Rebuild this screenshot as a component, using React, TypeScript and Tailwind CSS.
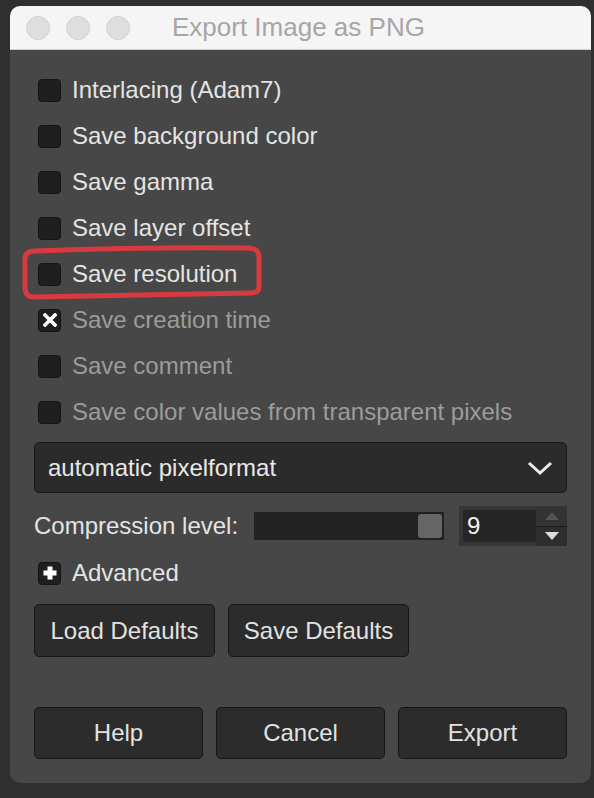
import type { ReactNode } from "react";

const FONT = { fontFamily: '"Liberation Sans", Arial, sans-serif' };

type Option = { label: string; checked?: boolean; disabled?: boolean };

const OPTIONS: Option[] = [
  { label: "Interlacing (Adam7)" },
  { label: "Save background color" },
  { label: "Save gamma" },
  { label: "Save layer offset" },
  { label: "Save resolution" },
  { label: "Save creation time", checked: true, disabled: true },
  { label: "Save comment", disabled: true },
  { label: "Save color values from transparent pixels", disabled: true },
];

function Box({ children }: { children?: ReactNode }) {
  return (
    <span className="flex h-[23px] w-[23px] shrink-0 items-center justify-center rounded-[4px] border border-[#141414] bg-[#1f1f1f]">
      {children}
    </span>
  );
}

function CrossMark() {
  return (
    <svg width="14" height="14" viewBox="0 0 14 14">
      <path d="M2 2 L12 12 M12 2 L2 12" stroke="#fff" strokeWidth="3.6" strokeLinecap="square" />
    </svg>
  );
}

function PlusMark() {
  return (
    <svg width="16" height="16" viewBox="0 0 16 16">
      <path d="M8 1.5 V14.5 M1.5 8 H14.5" stroke="#fff" strokeWidth="5" />
    </svg>
  );
}

function Button({ label, className = "" }: { label: string; className?: string }) {
  return (
    <button
      type="button"
      className={
        "flex items-center justify-center rounded-[5px] border border-[#161616] bg-[#2c2c2c] text-[24px] text-[#e2e2e2] " +
        className
      }
    >
      {label}
    </button>
  );
}

export default function App() {
  return (
    <div className="relative h-[798px] w-[594px] overflow-hidden bg-[#2f2f2f] pt-[6px] pl-[10px]" style={FONT}>
      <div className="flex h-[777px] w-[581px] flex-col overflow-hidden rounded-[10px] bg-[#474747]">
        {/* title bar */}
        <div className="relative flex h-[44px] shrink-0 items-center border-b border-[#cfcfcf] bg-[#f5f5f5] pl-[16px]">
          <div className="flex gap-[16px]">
            <span className="h-[24px] w-[24px] rounded-full border border-[#d2d2d2] bg-[#dedede]" />
            <span className="h-[24px] w-[24px] rounded-full border border-[#d2d2d2] bg-[#dedede]" />
            <span className="h-[24px] w-[24px] rounded-full border border-[#d2d2d2] bg-[#dedede]" />
          </div>
          <span className="ml-[42px] text-[26px] text-[#a6a6a6]">Export Image as PNG</span>
        </div>

        <div className="flex flex-1 flex-col px-[24px] pt-[17px] pb-[24px]">
          <div className="flex flex-col pl-[4px]">
            {OPTIONS.map((o) => (
              <div key={o.label} className="flex h-[46px] items-center gap-[11px]">
                <Box>{o.checked ? <CrossMark /> : null}</Box>
                <span className={"text-[24px] " + (o.disabled ? "text-[#9c9c9c]" : "text-[#e4e4e4]")}>
                  {o.label}
                </span>
              </div>
            ))}
          </div>

          {/* pixel format dropdown */}
          <div className="mt-[7px] flex h-[51px] items-center justify-between rounded-[5px] border border-[#191919] bg-[#2b2b2b] pl-[13px] pr-[13px]">
            <span className="text-[24px] text-[#e8e8e8]">automatic pixelformat</span>
            <svg width="26" height="16" viewBox="0 0 26 16">
              <path d="M2 3 L13 13 L24 3" fill="none" stroke="#ececec" strokeWidth="3" />
            </svg>
          </div>

          {/* compression level */}
          <div className="mt-[13px] flex h-[40px] items-center">
            <span className="w-[220px] text-[24px] text-[#e4e4e4]">Compression level:</span>
            <div className="flex h-[28px] w-[190px] items-center justify-end bg-[#222222] pr-[2px]">
              <span className="h-[24px] w-[24px] rounded-[3px] bg-[#666666]" />
            </div>
            <div className="ml-[15px] flex h-[40px] flex-1 bg-[#363636] p-[4px] pr-0">
              <div className="flex flex-1 items-center bg-[#262626] pl-[4px] text-[24px] text-[#f0f0f0]">9</div>
              <div className="-my-[4px] flex w-[31px] flex-col gap-[1px] bg-[#1a1a1a]">
                <div className="flex flex-1 items-center justify-center bg-[#333333]">
                  <svg width="14" height="8" viewBox="0 0 14 8">
                    <path d="M0 8 L7 0 L14 8 Z" fill="#555555" />
                  </svg>
                </div>
                <div className="flex flex-1 items-center justify-center bg-[#2e2e2e]">
                  <svg width="14" height="8" viewBox="0 0 14 8">
                    <path d="M0 0 L7 8 L14 0 Z" fill="#dddddd" />
                  </svg>
                </div>
              </div>
            </div>
          </div>

          {/* advanced */}
          <div className="mt-[4px] flex h-[46px] items-center gap-[11px] pl-[4px]">
            <Box>
              <PlusMark />
            </Box>
            <span className="text-[24px] text-[#e4e4e4]">Advanced</span>
          </div>

          <div className="mt-[8px] flex gap-[13px]">
            <Button label="Load Defaults" className="h-[53px] w-[181px]" />
            <Button label="Save Defaults" className="h-[53px] w-[181px]" />
          </div>

          <div className="mt-auto grid grid-cols-3 gap-[13px]">
            <Button label="Help" className="h-[52px]" />
            <Button label="Cancel" className="h-[52px]" />
            <Button label="Export" className="h-[52px]" />
          </div>
        </div>
      </div>

      {/* red hand-drawn annotation */}
      <svg className="pointer-events-none absolute left-0 top-0" width="594" height="798" viewBox="0 0 594 798">
        <path
          d="M34 251 C90 249 180 247 248 248 C257 248 259 252 259 258 L259 286 C259 292 256 293 250 293 C180 294 90 296 34 297 C27 297 25 293 25 287 L25 260 C25 254 28 251 34 251 Z"
          fill="none"
          stroke="#d93a3f"
          strokeWidth="5"
        />
      </svg>
    </div>
  );
}
